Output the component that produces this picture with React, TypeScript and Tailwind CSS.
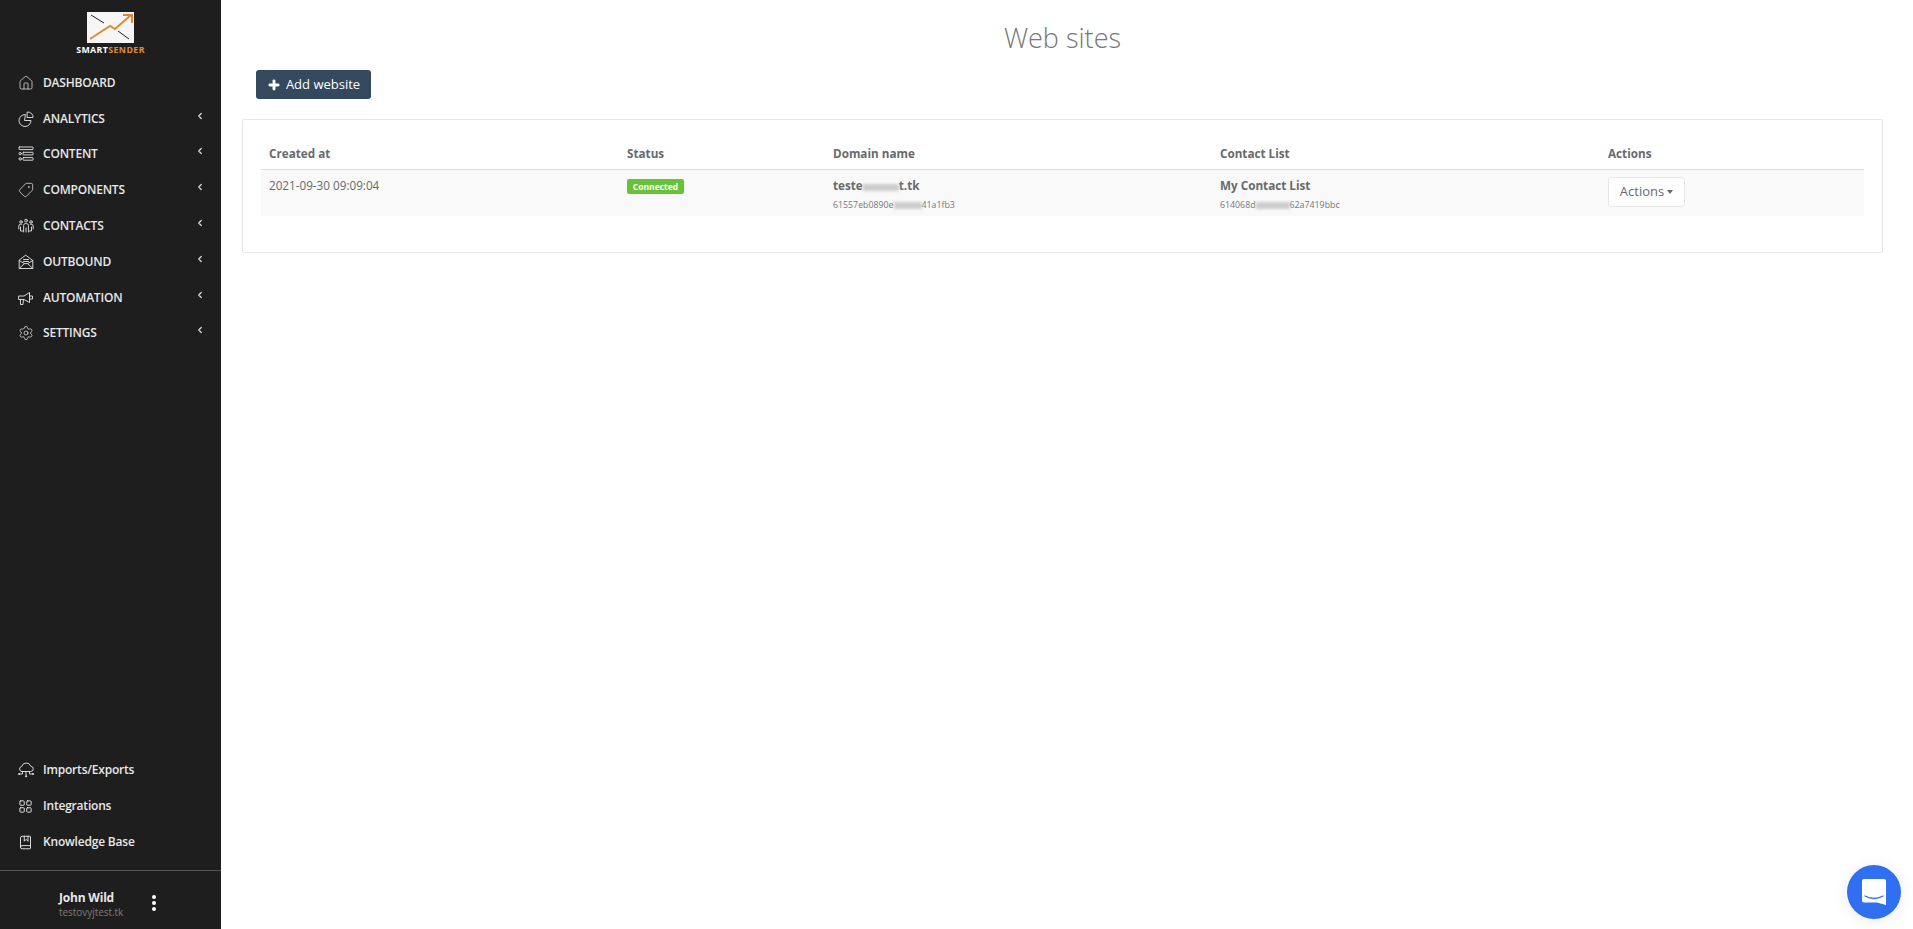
import React from "react";
import { House, Tag, Settings, ChevronLeft, LayoutGrid, BookMarked, Plus } from "lucide-react";

const S = ({ children }: { children: React.ReactNode }) => (
  <svg width="16" height="16" viewBox="0 0 16 16" fill="none" stroke="currentColor" strokeWidth="0.9" strokeLinecap="round" strokeLinejoin="round">
    {children}
  </svg>
);
const PieIcon = () => (
  <S>
    <path d="M7 3.5 A6 6 0 1 0 13 9.5 H7 Z" />
    <path d="M9.5 1 A5 5 0 0 1 15 6.5 H9.5 Z" />
  </S>
);
const ContentIcon = () => (
  <S>
    <rect x="1" y="1" width="14" height="2.6" rx="0.4" />
    <circle cx="2.2" cy="7.6" r="1.2" />
    <rect x="5" y="6.3" width="10" height="2.6" rx="0.4" />
    <circle cx="2.2" cy="12.9" r="1.2" />
    <rect x="5" y="11.6" width="10" height="2.6" rx="0.4" />
  </S>
);
const UsersIcon = () => (
  <S>
    <circle cx="8" cy="2.6" r="1.4" />
    <circle cx="3" cy="4" r="1.3" />
    <circle cx="13" cy="4" r="1.3" />
    <path d="M5.6 14 V7.5 a2 2 0 0 1 2 -2 h0.8 a2 2 0 0 1 2 2 V14 M8 10 V14" />
    <path d="M3.5 6.4 H2.4 a1.6 1.6 0 0 0 -1.6 1.6 V11 M2.5 9 V13 H4.5" />
    <path d="M12.5 6.4 H13.6 a1.6 1.6 0 0 1 1.6 1.6 V11 M13.5 9 V13 H11.5" />
  </S>
);
const MailIcon = () => (
  <S>
    <path d="M1.2 6.5 V14.5 H14.8 V6.5 L8 1.4 Z" />
    <path d="M1.2 14.5 L6.4 9.6 H9.6 L14.8 14.5 M1.2 6.5 L6.4 9.6 M14.8 6.5 L9.6 9.6" />
    <path d="M5.5 5.5 H10.5 M5.5 7.5 H10.5" />
  </S>
);
const MegaIcon = () => (
  <S>
    <path d="M1 6 H6 L11.5 2.5 V12.5 L6 9.5 H1 Z" />
    <path d="M2.5 9.5 V14.5 H5 L5.5 9.5 M11.5 6 H14.5 V9 H11.5" />
  </S>
);
const CloudIcon = () => (
  <S>
    <path d="M3.5 9.5 H12.5 a2.6 2.6 0 0 0 0.3 -5.2 A4.8 4.8 0 0 0 3.6 4.6 A2.5 2.5 0 0 0 3.5 9.5 Z" />
    <path d="M8 9.5 V14 M4.5 9.5 V12 H1.5 M11.5 9.5 V12 H14.5" />
    <circle cx="8" cy="14.3" r="0.6" />
    <circle cx="1" cy="12" r="0.6" />
    <circle cx="15" cy="12" r="0.6" />
  </S>
);

const top = [
  { label: "DASHBOARD", Icon: () => <House size={16} strokeWidth={1.1} />, arrow: false },
  { label: "ANALYTICS", Icon: PieIcon, arrow: true },
  { label: "CONTENT", Icon: ContentIcon, arrow: true },
  { label: "COMPONENTS", Icon: () => <Tag size={16} strokeWidth={1.1} className="-scale-x-100" />, arrow: true },
  { label: "CONTACTS", Icon: UsersIcon, arrow: true },
  { label: "OUTBOUND", Icon: MailIcon, arrow: true },
  { label: "AUTOMATION", Icon: MegaIcon, arrow: true },
  { label: "SETTINGS", Icon: () => <Settings size={16} strokeWidth={1.1} />, arrow: true },
];
const bottom = [
  { label: "Imports/Exports", Icon: CloudIcon },
  { label: "Integrations", Icon: () => <LayoutGrid size={15} strokeWidth={1.5} /> },
  { label: "Knowledge Base", Icon: () => <BookMarked size={15} strokeWidth={1.5} /> },
];

const Logo = () => (
  <div className="flex flex-col items-center">
    <svg width="47" height="31" viewBox="0 0 47 31" className="block">
      <rect width="47" height="31" fill="#f6f6f6" />
      <path d="M4 3 L17 11 M31 19 L42 27" stroke="#222" strokeWidth="1" />
      <path d="M3 27 L23 14 L28 17 L44 3" stroke="#e08a33" strokeWidth="2" fill="none" />
      <path d="M36 3 L45 3 L45 11" stroke="#e08a33" strokeWidth="2" fill="none" />
    </svg>
    <div className="text-[8.8px] leading-[12px] font-bold tracking-[0.4px] mt-[1px] whitespace-nowrap">
      <span className="text-white">SMART</span>
      <span className="text-[#e08a33]">SENDER</span>
    </div>
  </div>
);

const Blur = ({ w }: { w: string }) => (
  <span className={`inline-block ${w} h-[7px] -mb-[1px] bg-[#cccccc] blur-[1.5px]`} />
);

export default function App() {
  return (
    <div className="flex h-screen bg-white font-['Open_Sans',sans-serif] text-[#676a6c] overflow-hidden">
      <aside className="w-[221px] shrink-0 bg-[#1e1e1e] flex flex-col text-[#e8e8e8]">
        <div className="pt-[12px] h-[65px]">
          <Logo />
        </div>
        <nav className="flex flex-col">
          {top.map(({ label, Icon, arrow }) => (
            <div key={label} className="h-[35.8px] flex items-center pl-[18px] pr-[16px]">
              <span className="w-[25px] flex justify-start text-[#e8e8e8]">
                <Icon />
              </span>
              <span className="text-[12px] font-semibold tracking-[-0.2px]">{label}</span>
              {arrow && (
                <ChevronLeft size={10} strokeWidth={3} className="ml-auto -mt-[6px] text-[#d8d8d8]" />
              )}
            </div>
          ))}
        </nav>
        <div className="mt-auto flex flex-col">
          {bottom.map(({ label, Icon }) => (
            <div key={label} className="h-[36px] flex items-center pl-[18px]">
              <span className="w-[25px] flex text-[#e8e8e8]">
                <Icon />
              </span>
              <span className="text-[12px] font-semibold tracking-[-0.2px]">{label}</span>
            </div>
          ))}
        </div>
        <div className="mt-[10px] h-[59px] border-t border-[#555555] flex items-center pl-[59px]">
          <div className="w-[92px] mt-[8px]">
            <div className="text-[12px] leading-[16px] font-bold text-[#e8e8e8] tracking-[-0.2px]">John Wild</div>
            <div className="text-[10px] leading-[13px] text-[#7d7d7d] tracking-[-0.05px]">testovyjtest.tk</div>
          </div>
          <span className="flex flex-col gap-[2px] mt-[5px] ml-[1px]">
            <span className="w-[4px] h-[4px] rounded-full bg-white" />
            <span className="w-[4px] h-[4px] rounded-full bg-white" />
            <span className="w-[4px] h-[4px] rounded-full bg-white" />
          </span>
        </div>
      </aside>

      <main className="flex-1 min-w-0 pl-[21px] pr-[30px]">
        <h1 className="pt-[20px] h-[70px] text-center text-[27px] leading-[36px] font-light text-[#777777]">Web sites</h1>
        <button className="ml-[14px] h-[29px] w-[115px] flex items-center justify-center gap-[5px] rounded-[3px] bg-[#34495e] text-white text-[13px]">
          <Plus size={14} strokeWidth={5} />
          Add website
        </button>
        <section className="mt-[20px] h-[134px] border border-[#e7e7e7] rounded-[2px] pt-[18px] px-[18px]">
          <table className="w-full border-collapse table-fixed text-[11.7px]">
            <thead>
              <tr className="h-[31px] border-b border-[#dddddd] text-left">
                <th className="w-[358px] pl-[8px] pt-[2px] font-bold">Created at</th>
                <th className="w-[206px] pl-[8px] pt-[2px] font-bold">Status</th>
                <th className="w-[387px] pl-[8px] pt-[2px] font-bold">Domain name</th>
                <th className="w-[388px] pl-[8px] pt-[2px] font-bold">Contact List</th>
                <th className="pl-[8px] pt-[2px] font-bold">Actions</th>
              </tr>
            </thead>
            <tbody>
              <tr className="h-[47px] bg-[#f9f9f9] align-top">
                <td className="pl-[8px] pt-[7px] leading-[16px]">2021-09-30 09:09:04</td>
                <td className="pl-[8px] pt-[9px]">
                  <span className="block w-[57px] h-[15px] rounded-[2px] bg-[#67c23a] text-white text-[8.5px] font-bold leading-[15px] text-center">Connected</span>
                </td>
                <td className="pl-[8px] pt-[7px]">
                  <div className="font-bold leading-[16px] whitespace-nowrap">teste<Blur w="w-[36px]" />t.tk</div>
                  <div className="text-[8.8px] leading-[14px] mt-[5px] whitespace-nowrap text-[#777777]">61557eb0890e<Blur w="w-[28px]" />41a1fb3</div>
                </td>
                <td className="pl-[8px] pt-[7px]">
                  <div className="font-bold leading-[16px] whitespace-nowrap">My Contact List</div>
                  <div className="text-[8.8px] leading-[14px] mt-[5px] whitespace-nowrap text-[#777777]">614068d<Blur w="w-[34px]" />62a7419bbc</div>
                </td>
                <td className="pl-[8px] pt-[7px]">
                  <button className="h-[30px] w-[77px] flex items-center justify-center gap-[3px] bg-white border border-[#e7e7e7] rounded-[3px] text-[13px] text-[#676a6c]">
                    Actions
                    <span className="w-0 h-0 border-x-[3.5px] border-x-transparent border-t-[4px] border-t-[#676a6c]" />
                  </button>
                </td>
              </tr>
            </tbody>
          </table>
        </section>
      </main>

      <div className="fixed right-[12px] bottom-[10px] w-[54px] h-[54px] rounded-full bg-[#2f6ff0] shadow-[0_2px_16px_rgba(0,0,0,0.08)] flex items-center justify-center">
        <svg width="26" height="28" viewBox="0 0 26 28">
          <path d="M3 1 H23 a2 2 0 0 1 2 2 V27 L16 24.5 H3 a2 2 0 0 1 -2 -2 V3 a2 2 0 0 1 2 -2 Z" fill="#fff" />
          <path d="M4 18 Q13 23 22 18" stroke="#2f6ff0" strokeWidth="1.4" fill="none" strokeLinecap="round" />
        </svg>
      </div>
    </div>
  );
}
